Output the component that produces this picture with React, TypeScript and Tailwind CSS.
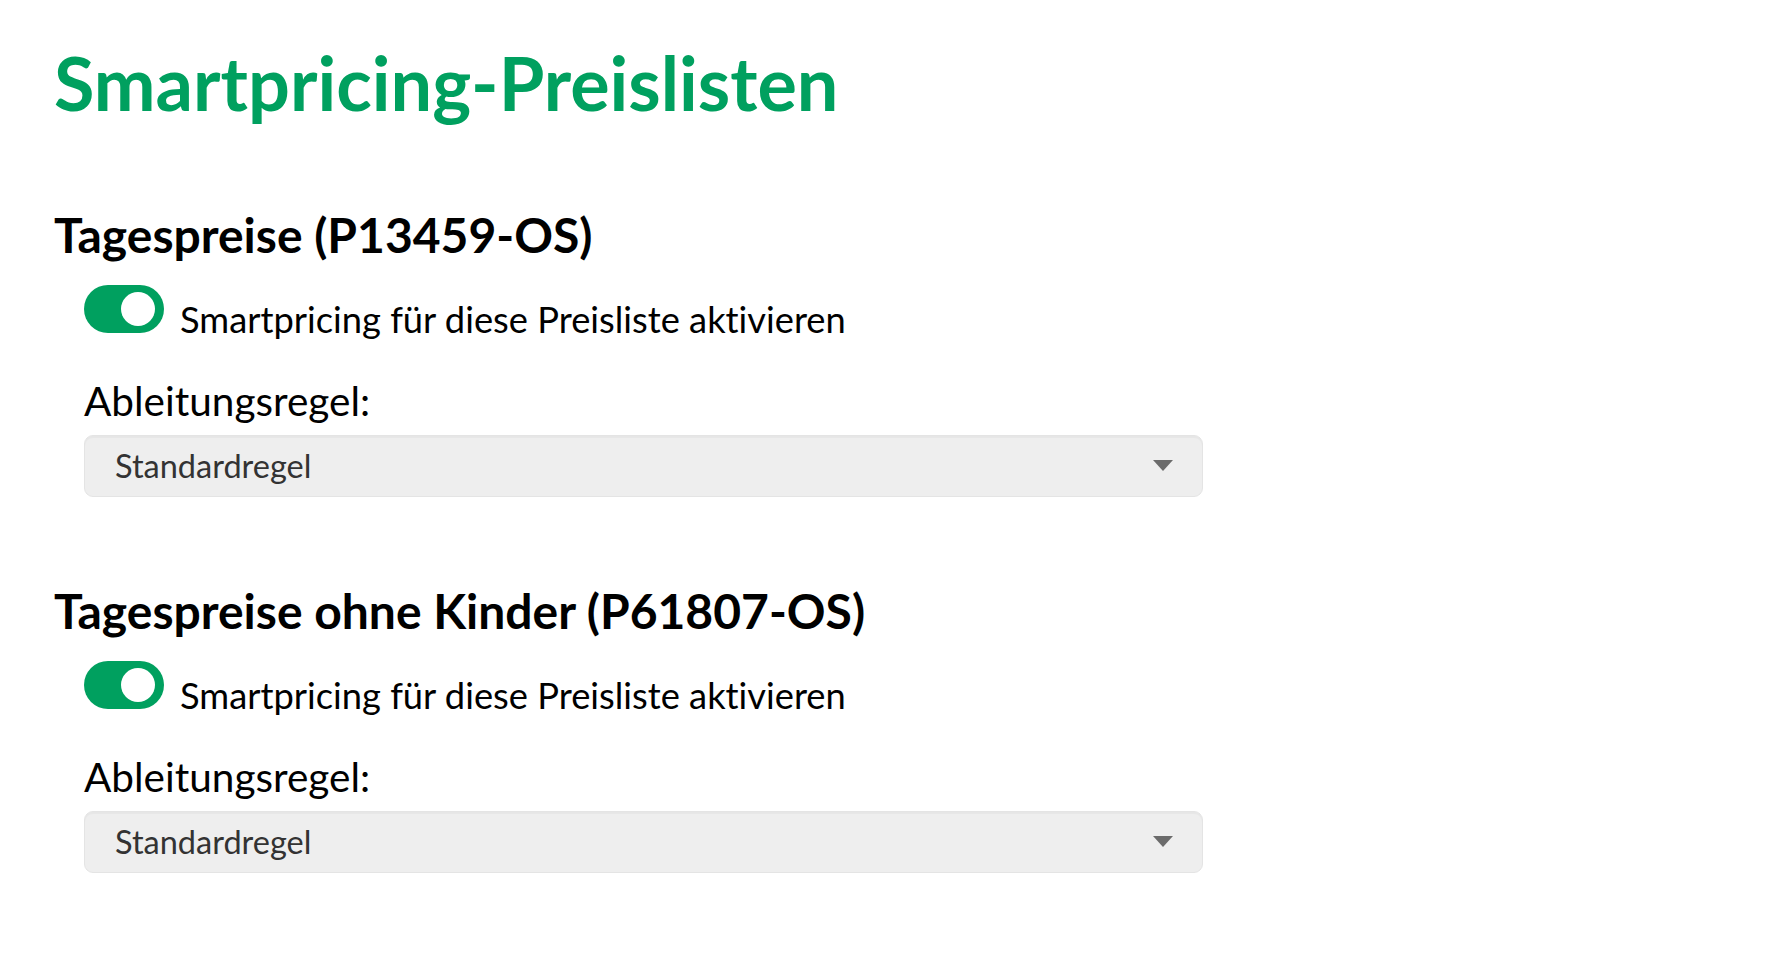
import React from "react";

const GREEN = "bg-[#00a05f]";

function Toggle() {
  return (
    <div className={`relative h-[48px] w-[80px] shrink-0 rounded-full ${GREEN}`}>
      <div className="absolute right-[9px] top-[7px] h-[34px] w-[34px] rounded-full bg-white" />
    </div>
  );
}

function Select() {
  return (
    <div className="flex h-[62px] w-[1119px] items-center justify-between rounded-[9px] border border-[#e4e4e4] bg-[#eeeeee] pl-[30px] pr-[29px] shadow-[inset_0_2px_1px_rgba(0,0,0,0.03)]">
      <span className="text-[32.5px] leading-[62px] text-[#333333]">Standardregel</span>
      <svg width="20" height="12" viewBox="0 0 20 12">
        <polygon points="0,0 20,0 10,11" fill="#6b6b6b" />
      </svg>
    </div>
  );
}

function Section({ title }: { title: string }) {
  return (
    <section className="flex flex-col">
      <h2 className="text-[48px] font-bold leading-[58px] text-black">{title}</h2>
      <div className="ml-[30px] mt-[21px] flex items-start gap-[16px]">
        <Toggle />
        <span className="mt-[10px] text-[36.3px] leading-[48px] text-black">
          Smartpricing für diese Preisliste aktivieren
        </span>
      </div>
      <div className="ml-[30px] mt-[34px] text-[40.5px] leading-[48px] text-black">Ableitungsregel:</div>
      <div className="ml-[30px] mt-[10px]">
        <Select />
      </div>
    </section>
  );
}

export default function App() {
  return (
    <div
      className="min-h-[956px] w-full bg-white pl-[54px] pt-[40px] [font-variant-ligatures:none]"
      style={{ fontFamily: "Lato, 'Noto Sans', sans-serif" }}
    >
      <h1 className="text-[73.8px] font-bold leading-[86px] text-[#00a05f]">Smartpricing-Preislisten</h1>
      <div className="mt-[80px] flex flex-col gap-[85px]">
        <Section title="Tagespreise (P13459-OS)" />
        <Section title="Tagespreise ohne Kinder (P61807-OS)" />
      </div>
    </div>
  );
}
